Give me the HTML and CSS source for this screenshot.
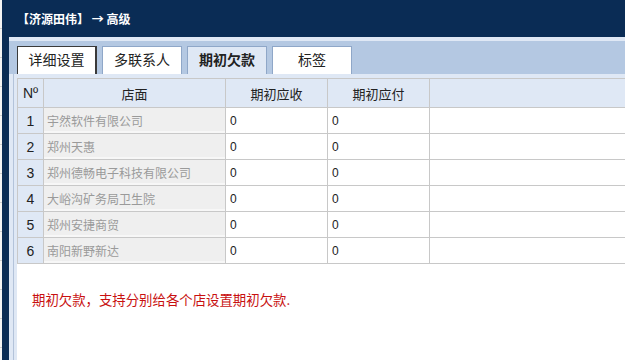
FILE: index.html
```html
<!DOCTYPE html>
<html lang="zh-CN">
<head>
  <meta charset="UTF-8" />
  <title>高级</title>
  <link rel="stylesheet" href="styles.css">
</head>
<body>
  <div class="backdrop"></div>
  <div class="window">
    <div class="title">【济源田伟】 → 高级</div>
    <div class="body">
      <div class="tabs">
        <div class="tab focus">详细设置</div>
        <div class="tab">多联系人</div>
        <div class="tab active">期初欠款</div>
        <div class="tab">标签</div>
      </div>
      <div class="content">
        <div class="sheet">
          <table class="grid">
            <thead>
              <tr>
                <th class="no">Nº</th>
                <th class="store">店面</th>
                <th class="num">期初应收</th>
                <th class="num">期初应付</th>
                <th></th>
              </tr>
            </thead>
            <tbody id="rows"></tbody>
          </table>
          <p class="note">期初欠款，支持分别给各个店设置期初欠款.</p>
        </div>
      </div>
    </div>
  </div>

  <script>
    const stores = [
      "宇然软件有限公司",
      "郑州天惠",
      "郑州德畅电子科技有限公司",
      "大峪沟矿务局卫生院",
      "郑州安捷商贸",
      "南阳新野新达"
    ];

    const tbody = document.getElementById("rows");
    stores.forEach((name, i) => {
      const tr = document.createElement("tr");
      tr.innerHTML = `
        <td class="no">${i + 1}</td>
        <td class="store">${name}</td>
        <td class="num">0</td>
        <td class="num">0</td>
        <td></td>
      `;
      tbody.appendChild(tr);
    });
  </script>
</body>
</html>
```

FILE: styles.css
```css
* {
  box-sizing: border-box;
}
html, body {
  height: 100%;
}
body {
  margin: 0;
  display: flex;
  overflow: hidden;
  font-family: "Liberation Sans", "Noto Sans CJK SC", sans-serif;
  color: #222;
  background: #fff;
}
.backdrop {
  width: 2px;
  background: repeating-linear-gradient(#f4f4f4 0 28px, #cfcfcf 28px 29px);
}
.window {
  flex: 1;
  display: flex;
  flex-direction: column;
  background: #0a2c55;
  padding-left: 7px;
}
.title {
  height: 37px;
  line-height: 37px;
  padding-left: 8px;
  color: #fff;
  font-family: "Noto Sans CJK SC", sans-serif;
  font-size: 12px;
  font-weight: bold;
}
.body {
  flex: 1;
  display: flex;
  flex-direction: column;
  background: #dfe8f5;
  padding-top: 4px;
}
.tabs {
  display: flex;
  align-items: flex-end;
  gap: 5px;
  height: 33px;
  padding: 5px 0 0 8px;
  background: #b4c8e2;
}
.tab {
  width: 80px;
  height: 28px;
  line-height: 26px;
  text-align: center;
  font-size: 14px;
  background: #fff;
  border: 1px solid #8fa7c8;
  border-bottom: none;
}
.tab.focus {
  border-color: #3a3a3a;
  border-width: 1px 2px 0 1px;
}
.tab.active {
  background: #dfe8f5;
  font-weight: bold;
}
.content {
  flex: 1;
  display: flex;
  margin-left: 4px;
  padding: 4px 0 0 3px;
  border-left: 1px solid #b3c3da;
}
.sheet {
  flex: 1;
  background: #fff;
}
.grid {
  width: 100%;
  border-collapse: collapse;
  font-size: 12px;
}
.grid th,
.grid td {
  height: 26px;
  padding: 0;
  border: 1px solid #c8c8c8;
}
.grid tr:first-child th {
  height: 29px;
}
.grid th {
  background: #dfe8f5;
  font-weight: normal;
  font-size: 13px;
  color: #222;
}
.grid th:last-child,
.grid td:last-child {
  border-right: none;
}
.grid .no {
  width: 26px;
  text-align: center;
  font-size: 14px;
  background: #dfe8f5;
}
.grid th.store {
  width: 182px;
}
.grid td.store {
  padding-left: 3px;
  color: #9a9a9a;
  background: #efefef;
  box-shadow: inset 0 -2px 0 #f7f7f7;
}
.grid th.num {
  width: 102px;
}
.grid td.num {
  padding-left: 4px;
}
.note {
  margin: 25px 0 0 15px;
  font-size: 13.4px;
  color: #c81010;
  font-family: "Noto Sans CJK SC", sans-serif;
}
```
